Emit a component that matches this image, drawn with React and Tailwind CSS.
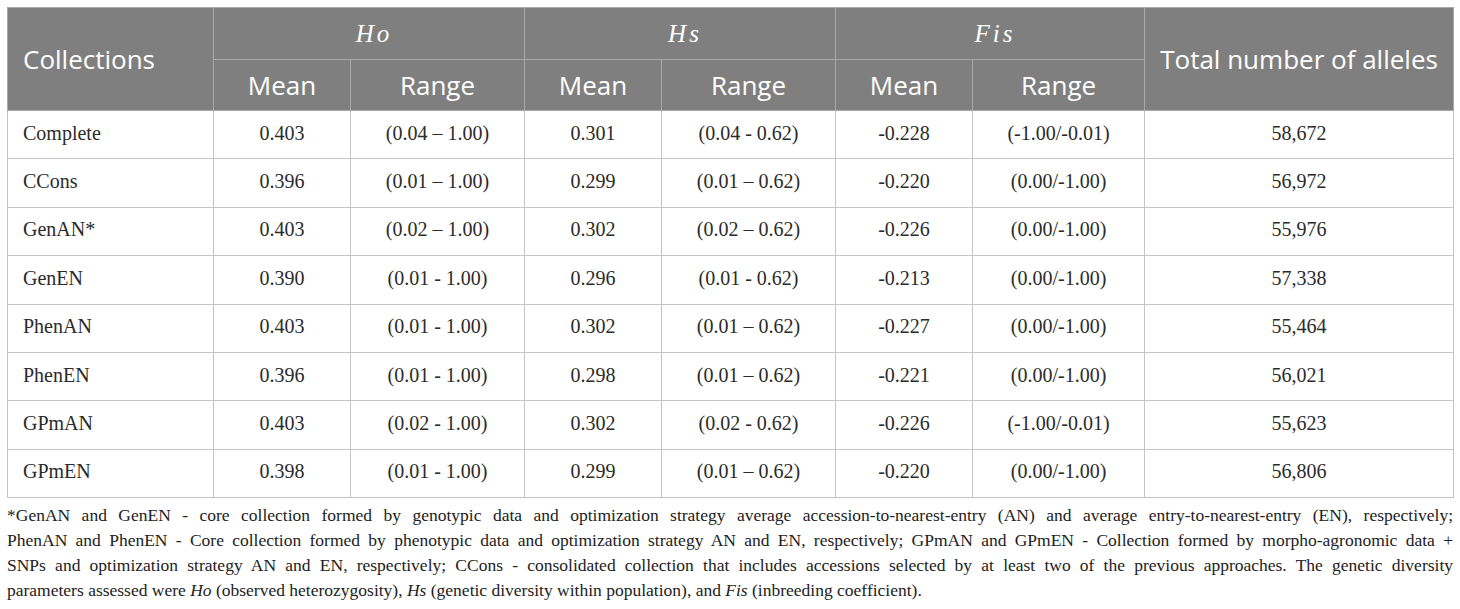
const rows = [
  ["Complete", "0.403", "(0.04 – 1.00)", "0.301", "(0.04 - 0.62)", "-0.228", "(-1.00/-0.01)", "58,672"],
  ["CCons", "0.396", "(0.01 – 1.00)", "0.299", "(0.01 – 0.62)", "-0.220", "(0.00/-1.00)", "56,972"],
  ["GenAN*", "0.403", "(0.02 – 1.00)", "0.302", "(0.02 – 0.62)", "-0.226", "(0.00/-1.00)", "55,976"],
  ["GenEN", "0.390", "(0.01 - 1.00)", "0.296", "(0.01 - 0.62)", "-0.213", "(0.00/-1.00)", "57,338"],
  ["PhenAN", "0.403", "(0.01 - 1.00)", "0.302", "(0.01 – 0.62)", "-0.227", "(0.00/-1.00)", "55,464"],
  ["PhenEN", "0.396", "(0.01 - 1.00)", "0.298", "(0.01 – 0.62)", "-0.221", "(0.00/-1.00)", "56,021"],
  ["GPmAN", "0.403", "(0.02 - 1.00)", "0.302", "(0.02 - 0.62)", "-0.226", "(-1.00/-0.01)", "55,623"],
  ["GPmEN", "0.398", "(0.01 - 1.00)", "0.299", "(0.01 – 0.62)", "-0.220", "(0.00/-1.00)", "56,806"],
];

// header cell styles
const th = "border border-[#a9a9a9] bg-[#7f7f7f] text-white font-normal";
const math = `${th} font-['Liberation_Serif',serif] italic text-[25px] tracking-[3px] pl-[10px]`;
const td = "border border-[#c4c4c4] text-center pb-[4px]";

export default function App() {
  return (
    <div className="bg-white w-[1460px] h-[609px] px-[7px] pt-[7px] font-['Liberation_Serif',serif] text-[#2b2b2b]">
      <table className="w-[1446px] border-collapse table-fixed">
        <colgroup>
          <col className="w-[206px]" />
          <col className="w-[137px]" />
          <col className="w-[174px]" />
          <col className="w-[137px]" />
          <col className="w-[174px]" />
          <col className="w-[137px]" />
          <col className="w-[172px]" />
          <col className="w-[309px]" />
        </colgroup>
        <thead className="font-['Open_Sans',sans-serif] text-[26px]">
          <tr className="h-[52px]">
            <th rowSpan={2} className={`${th} text-left pl-[15px]`}>Collections</th>
            <th colSpan={2} className={math}>Ho</th>
            <th colSpan={2} className={math}>Hs</th>
            <th colSpan={2} className={math}>Fis</th>
            <th rowSpan={2} className={`${th} text-center`}>Total number of alleles</th>
          </tr>
          <tr className="h-[51px]">
            <th className={th}>Mean</th>
            <th className={th}>Range</th>
            <th className={th}>Mean</th>
            <th className={th}>Range</th>
            <th className={th}>Mean</th>
            <th className={th}>Range</th>
          </tr>
        </thead>
        <tbody className="text-[20px]">
          {rows.map((r) => (
            <tr key={r[0]} className="h-[48.4px]">
              <td className={`${td} text-left pl-[15px]`}>{r[0]}</td>
              {r.slice(1).map((c, i) => (
                <td key={i} className={td}>{c}</td>
              ))}
            </tr>
          ))}
        </tbody>
      </table>
      <div className="mt-[5px] text-[17.5px] leading-[25px] text-[#222]">
        <p className="text-justify [text-align-last:justify]">
          *GenAN and GenEN - core collection formed by genotypic data and optimization strategy average accession-to-nearest-entry (AN) and average entry-to-nearest-entry (EN), respectively;
        </p>
        <p className="text-justify [text-align-last:justify]">
          PhenAN and PhenEN - Core collection formed by phenotypic data and optimization strategy AN and EN, respectively; GPmAN and GPmEN - Collection formed by morpho-agronomic data +
        </p>
        <p className="text-justify [text-align-last:justify]">
          SNPs and optimization strategy AN and EN, respectively; CCons - consolidated collection that includes accessions selected by at least two of the previous approaches. The genetic diversity
        </p>
        <p>
          parameters assessed were <i>Ho</i> (observed heterozygosity), <i>Hs</i> (genetic diversity within population), and <i>Fis</i> (inbreeding coefficient).
        </p>
      </div>
    </div>
  );
}
